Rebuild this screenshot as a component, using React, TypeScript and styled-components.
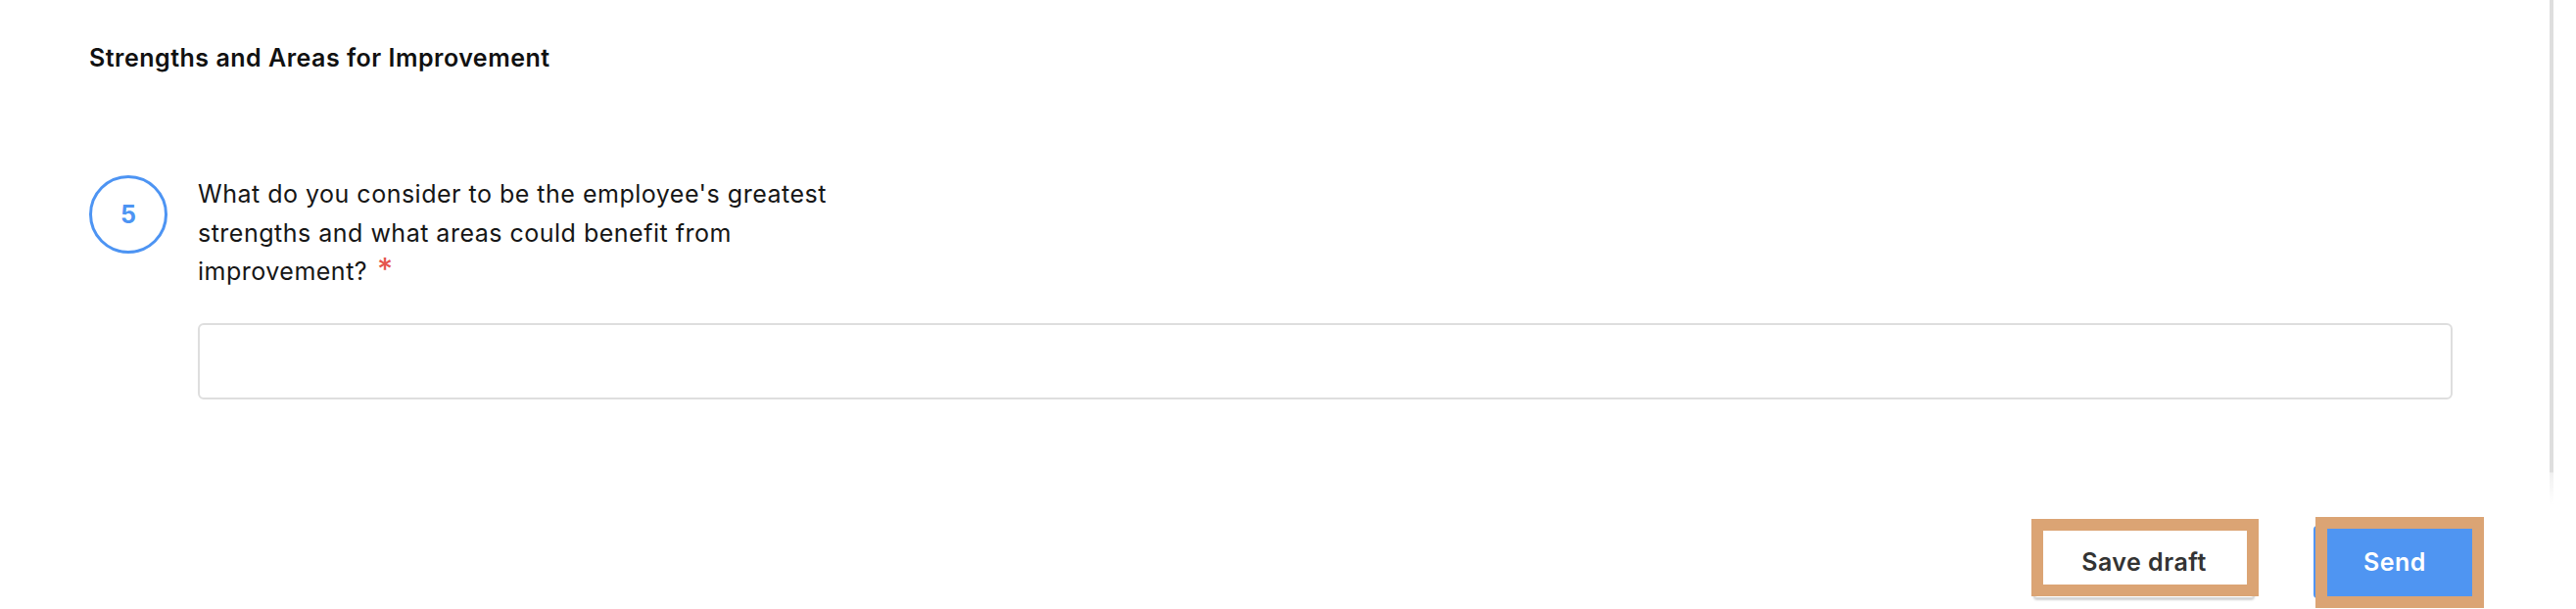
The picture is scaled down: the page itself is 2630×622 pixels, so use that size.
import React from "react";
import styled, { createGlobalStyle } from "styled-components";

const GlobalStyle = createGlobalStyle`
  html, body { margin: 0; padding: 0; background: #ffffff; }
  body { font-family: "Inter", "Liberation Sans", sans-serif; }
  * { box-sizing: border-box; }
`;

const Page = styled.div`
  position: relative;
  width: 2630px;
  min-height: 622px;
  padding: 44px 102px 0 91px;
  overflow: hidden;
`;

const SectionTitle = styled.h2`
  margin: 0;
  font-size: 25px;
  line-height: 30px;
  letter-spacing: 0.5px;
  font-weight: 600;
  color: #111111;
`;

const QuestionRow = styled.div`
  display: flex;
  align-items: flex-start;
  gap: 31px;
  margin-top: 105px;
  margin-right: 24px;
`;

const NumberBadge = styled.div`
  flex: none;
  width: 80px;
  height: 80px;
  border-radius: 50%;
  border: 3.5px solid #4d94f3;
  display: flex;
  align-items: center;
  justify-content: center;
  color: #4d94f3;
  font-size: 25px;
  font-weight: 700;
`;

const QuestionBody = styled.div`
  flex: 1;
  display: flex;
  flex-direction: column;
  gap: 32px;
`;

const QuestionText = styled.p`
  margin: 0;
  max-width: 680px;
  font-size: 25px;
  line-height: 39.5px;
  letter-spacing: 0.5px;
  color: #161616;
`;

const Required = styled.span`
  color: #e5554d;
  margin-left: 10px;
  font-size: 31px;
  line-height: 1;
  font-weight: 500;
`;

const AnswerInput = styled.input`
  width: 100%;
  height: 78px;
  border: 2px solid #dedede;
  border-radius: 6px;
  background: #ffffff;
  font-family: inherit;
  font-size: 24px;
  padding: 0 20px;
  outline: none;
`;

const Footer = styled.div`
  display: flex;
  justify-content: flex-end;
  align-items: flex-end;
  gap: 60px;
  margin-top: 129px;
`;

const ButtonBase = styled.button`
  position: relative;
  height: 74px;
  font-family: inherit;
  font-size: 25px;
  letter-spacing: 0.5px;
  font-weight: 600;
  border-radius: 4px;
  cursor: pointer;
  display: flex;
  align-items: center;
  justify-content: center;
`;

const DraftButton = styled(ButtonBase)`
  width: 226px;
  background: #ffffff;
  color: #333333;
  border: 1px solid #d8d8d8;
  box-shadow: 0 2px 2px rgba(0, 0, 0, 0.18);
`;

const SendButton = styled(ButtonBase)`
  width: 166px;
  background: #4f95f2;
  color: #ffffff;
  border: none;
`;

const Highlight = styled.span<{ $l: number; $t: number; $w: number; $h: number }>`
  position: absolute;
  left: ${(p) => p.$l}px;
  top: ${(p) => p.$t}px;
  width: ${(p) => p.$w}px;
  height: ${(p) => p.$h}px;
  border: 12px solid #dba474;
  pointer-events: none;
`;

const ScrollThumb = styled.div`
  position: absolute;
  top: 0;
  left: 2603px;
  width: 4px;
  height: 515px;
  background: linear-gradient(
    to bottom,
    #dedede 0,
    #dedede 482px,
    #f1f1f1 483px,
    rgba(255, 255, 255, 0) 515px
  );
`;

export default function App() {
  return (
    <>
      <GlobalStyle />
      <Page>
        <SectionTitle>Strengths and Areas for Improvement</SectionTitle>
        <QuestionRow>
          <NumberBadge>5</NumberBadge>
          <QuestionBody>
            <QuestionText>
              What do you consider to be the employee's greatest strengths and what areas could
              benefit from improvement?<Required>*</Required>
            </QuestionText>
            <AnswerInput type="text" aria-label="answer" />
          </QuestionBody>
        </QuestionRow>
        <Footer>
          <DraftButton>
            Save draft
            <Highlight $l={-3} $t={-8} $w={232} $h={79} />
          </DraftButton>
          <SendButton>
            Send
            <Highlight $l={2} $t={-9} $w={172} $h={93} />
          </SendButton>
        </Footer>
        <ScrollThumb />
      </Page>
    </>
  );
}
